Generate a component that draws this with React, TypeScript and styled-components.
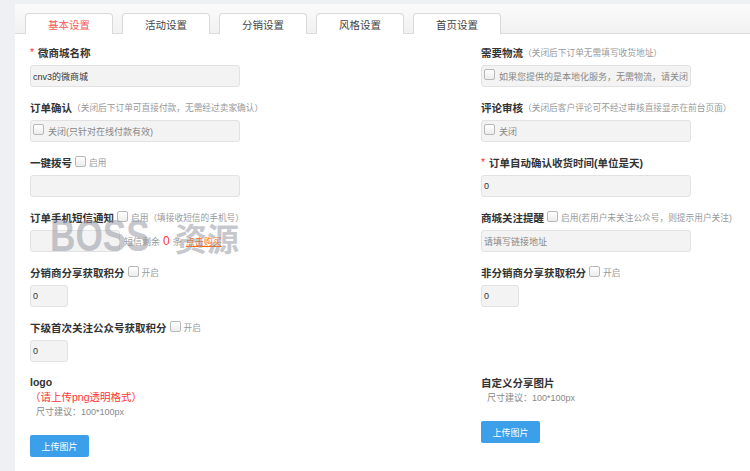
import React from 'react';
import styled, { createGlobalStyle } from 'styled-components';

const GlobalStyle = createGlobalStyle`
  body {
    margin: 0;
    background: #eef0f4;
    font-family: "Liberation Sans", "Noto Sans CJK SC", sans-serif;
  }
`;

const Page = styled.div`
  height: 471px;
  padding: 4px 0 0 15px;
  box-sizing: border-box;
  overflow: hidden;
`;

const Panel = styled.section`
  position: relative;
  background: #fff;
  height: 100%;
`;

const TabBar = styled.nav`
  height: 30px;
  box-sizing: border-box;
  display: flex;
  align-items: flex-end;
  gap: 9px;
  padding-left: 10px;
  background: linear-gradient(#fbfbfb, #f1f1f1);
  border-bottom: 1px solid #dcdcdc;
`;

const Tab = styled.div<{ $active?: boolean }>`
  width: 88px;
  height: 21px;
  box-sizing: border-box;
  margin-bottom: -1px;
  background: #fff;
  border: 1px solid #d9d9d9;
  border-bottom: none;
  border-radius: 4px 4px 0 0;
  display: flex;
  align-items: center;
  justify-content: center;
  font-size: 10.5px;
  color: ${({ $active }) => ($active ? '#f45a5a' : '#444')};
`;

const Form = styled.div`
  display: grid;
  grid-template-columns: 451px 1fr;
  row-gap: 13px;
  padding: 11px 0 0 15px;
`;

const Field = styled.div`
  display: flex;
  flex-direction: column;
  align-items: flex-start;
`;

const Label = styled.div<{ $tight?: boolean }>`
  display: flex;
  align-items: center;
  height: 14px;
  margin-bottom: ${({ $tight }) => ($tight ? 0 : 6)}px;
  font-size: 10.5px;
  font-weight: bold;
  color: #333;
  white-space: nowrap;
`;

const Star = styled.span`
  color: #f33;
  font-weight: normal;
  margin-right: 4px;
`;

const Hint = styled.span`
  font-size: 8.7px;
  font-weight: normal;
  color: #999;
`;

const InputBox = styled.div<{ $width?: number; $muted?: boolean }>`
  width: ${({ $width }) => $width ?? 210}px;
  height: 22px;
  box-sizing: border-box;
  padding: 0 2px;
  display: flex;
  align-items: center;
  background: #f3f3f3;
  border: 1px solid #e2e2e2;
  border-radius: 3px;
  font-size: 9px;
  color: ${({ $muted }) => ($muted ? '#888' : '#333')};
  white-space: nowrap;
`;

const Check = styled.span`
  display: inline-block;
  width: 9px;
  height: 9px;
  margin: 0 3px 2px 3px;
  border: 1px solid #b8b8b8;
  border-radius: 2px;
  background: linear-gradient(#fff, #ececec);
  flex-shrink: 0;
`;

const BoxCheck = styled(Check)`
  margin: 0 4px 3px 0;
`;

const InlineRow = styled.div`
  display: flex;
  align-items: center;
  gap: 4px;
`;

const SmsInfo = styled.span`
  font-size: 9px;
  color: #999;
  white-space: nowrap;
`;

const Count = styled.span`
  color: #f33;
  font-size: 12px;
  margin: 0 3px;
`;

const BuyLink = styled.a`
  color: #f60;
  text-decoration: underline;
  margin-left: 4px;
`;

const Warn = styled.div`
  font-size: 10.5px;
  color: #f33;
  line-height: 16px;
`;

const SizeNote = styled.div<{ $offset?: number }>`
  font-size: 9px;
  color: #888;
  line-height: 15px;
  padding-left: 6px;
  margin-top: ${({ $offset }) => $offset ?? 0}px;
`;

const UploadButton = styled.button`
  width: 59px;
  height: 22px;
  margin-top: 15px;
  border: none;
  border-radius: 2px;
  background: #3c9fe9;
  color: #fff;
  font-family: inherit;
  font-size: 9px;
  padding: 0;
`;

const Watermark = styled.div`
  position: absolute;
  left: 35px;
  top: 210px;
  display: flex;
  align-items: baseline;
  line-height: 1;
  font-weight: bold;
  color: rgba(150, 152, 162, 0.55);
  pointer-events: none;
`;

const MarkLatin = styled.span`
  display: inline-block;
  font-size: 44px;
  transform: scaleX(0.8);
  transform-origin: left;
  width: 100px;
`;

const MarkCjk = styled.span`
  font-size: 32px;
  margin-left: 25px;
`;

const tabs = ['基本设置', '活动设置', '分销设置', '风格设置', '首页设置'];

export default function App() {
  return (
    <Page>
      <GlobalStyle />
      <Panel>
        <TabBar>
          {tabs.map((t, i) => (
            <Tab key={t} $active={i === 0}>{t}</Tab>
          ))}
        </TabBar>

        <Form>
          <Field>
            <Label><Star>*</Star>微商城名称</Label>
            <InputBox>cnv3的微商城</InputBox>
          </Field>
          <Field>
            <Label>需要物流<Hint>（关闭后下订单无需填写收货地址）</Hint></Label>
            <InputBox $muted><BoxCheck />如果您提供的是本地化服务，无需物流，请关闭</InputBox>
          </Field>

          <Field>
            <Label>订单确认<Hint>（关闭后下订单可直接付款，无需经过卖家确认）</Hint></Label>
            <InputBox $muted><BoxCheck />关闭(只针对在线付款有效)</InputBox>
          </Field>
          <Field>
            <Label>评论审核<Hint>（关闭后客户评论可不经过审核直接显示在前台页面）</Hint></Label>
            <InputBox $muted><BoxCheck />关闭</InputBox>
          </Field>

          <Field>
            <Label>一键拨号<Check /><Hint>启用</Hint></Label>
            <InputBox />
          </Field>
          <Field>
            <Label><Star>*</Star>订单自动确认收货时间(单位是天)</Label>
            <InputBox>0</InputBox>
          </Field>

          <Field>
            <Label>订单手机短信通知<Check /><Hint>启用（填接收短信的手机号）</Hint></Label>
            <InlineRow>
              <InputBox $width={90} />
              <SmsInfo>
                短信剩余<Count>0</Count>条<BuyLink>点击购买</BuyLink>
              </SmsInfo>
            </InlineRow>
          </Field>
          <Field>
            <Label>商城关注提醒<Check /><Hint>启用(若用户未关注公众号，则提示用户关注)</Hint></Label>
            <InputBox $muted>请填写链接地址</InputBox>
          </Field>

          <Field>
            <Label>分销商分享获取积分<Check /><Hint>开启</Hint></Label>
            <InputBox $width={38}>0</InputBox>
          </Field>
          <Field>
            <Label>非分销商分享获取积分<Check /><Hint>开启</Hint></Label>
            <InputBox $width={38}>0</InputBox>
          </Field>

          <Field>
            <Label>下级首次关注公众号获取积分<Check /><Hint>开启</Hint></Label>
            <InputBox $width={38}>0</InputBox>
          </Field>
          <div />

          <Field>
            <Label $tight>logo</Label>
            <Warn>（请上传png透明格式）</Warn>
            <SizeNote>尺寸建议：100*100px</SizeNote>
            <UploadButton>上传图片</UploadButton>
          </Field>
          <Field>
            <Label $tight>自定义分享图片</Label>
            <SizeNote $offset={2}>尺寸建议：100*100px</SizeNote>
            <UploadButton>上传图片</UploadButton>
          </Field>
        </Form>

        <Watermark>
          <MarkLatin>BOSS</MarkLatin>
          <MarkCjk>资源</MarkCjk>
        </Watermark>
      </Panel>
    </Page>
  );
}
